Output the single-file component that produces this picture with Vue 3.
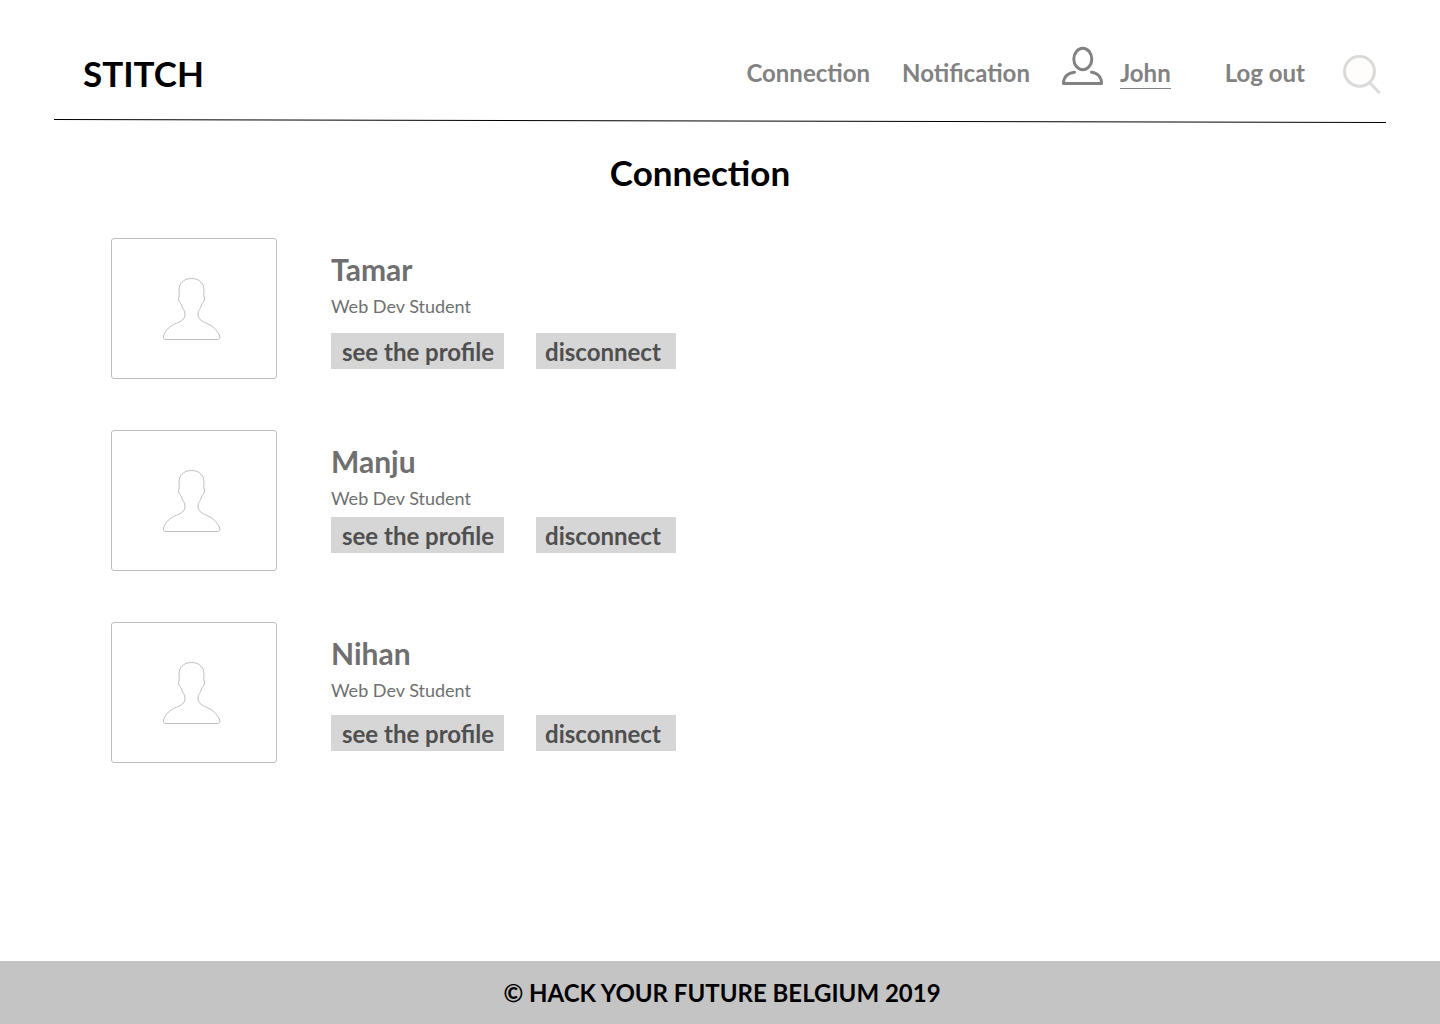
<script setup>
const people = [
  { name: 'Tamar', role: 'Web Dev Student', spacing: 'roomy' },
  { name: 'Manju', role: 'Web Dev Student', spacing: 'tight' },
  { name: 'Nihan', role: 'Web Dev Student', spacing: 'medium' },
]
</script>

<template>
  <div class="page">
    <header class="header">
      <div class="bar">
        <a class="logo" href="#">STITCH</a>
        <nav class="nav">
          <a href="#">Connection</a>
          <a class="notification" href="#">Notification</a>
          <svg class="user-icon" viewBox="0 0 42 40" aria-hidden="true">
            <ellipse cx="20.8" cy="13" rx="9" ry="10.7" />
            <path d="M12.5 26.2C6 26.8 1.5 31 1.5 37.5H39.5C39.5 31 35.5 26.8 29.5 26.2" />
          </svg>
          <a class="user" href="#">John</a>
          <a class="logout" href="#">Log out</a>
          <button class="search" type="button" aria-label="Search">
            <svg viewBox="0 0 38 40" aria-hidden="true">
              <circle cx="16.5" cy="16.3" r="15" />
              <path d="M27 28L36.8 38.3" />
            </svg>
          </button>
        </nav>
      </div>
      <svg class="rule" viewBox="0 0 1332 4" preserveAspectRatio="none" aria-hidden="true">
        <line x1="0" y1="0.5" x2="1332" y2="3.5" />
      </svg>
    </header>

    <main class="main">
      <h1>Connection</h1>
      <ul class="people">
        <li v-for="person in people" :key="person.name" class="person">
          <div class="photo">
            <svg viewBox="0 0 60 64" aria-hidden="true">
              <path d="M29.5 1.5C20.5 1.5 17 7.5 17 13C17 16 17.3 18 17.3 19C16 20.5 16.5 23.5 17.5 25C18.2 26.2 19 26.2 19.5 28C20.3 32 23 33 23 37C23 42.5 19 44.5 14 46.5C6 49.5 2.5 55.5 1.6 59C1 61.3 2 62.5 4 62.5H55.5C57.5 62.5 58.3 61.3 57.7 59C56.5 55.5 52.5 49.5 45 46.5C40.5 44.5 36 42.5 36 37C36 33 38.7 32 39.5 28C40 26.2 40.8 26.2 41.5 25C42.5 23.5 43 20.5 41.7 19C41.7 18 42 16 42 13C42 7.5 38.5 1.5 29.5 1.5Z" />
            </svg>
          </div>
          <div class="details">
            <h2>{{ person.name }}</h2>
            <p>{{ person.role }}</p>
            <div class="actions" :class="person.spacing">
              <button class="profile" type="button">see the profile</button>
              <button class="disconnect" type="button">disconnect</button>
            </div>
          </div>
        </li>
      </ul>
    </main>

    <footer class="footer">© HACK YOUR FUTURE BELGIUM 2019</footer>
  </div>
</template>

<style>
body {
  margin: 0;
  background: #fff;
}
</style>

<style scoped>
.page {
  display: flex;
  flex-direction: column;
  min-height: 100vh;
  font-family: Lato, Carlito, sans-serif;
  font-weight: 700;
}

a {
  color: inherit;
  text-decoration: none;
}

button {
  margin: 0;
  border: 0;
  font: inherit;
  cursor: pointer;
}

svg {
  display: block;
  flex: none;
  fill: none;
}

.header {
  padding: 46px 54px 0;
}

.bar {
  display: flex;
  justify-content: space-between;
  align-items: flex-start;
  height: 73px;
  padding: 0 5px 0 29px;
}

.logo {
  margin-top: 5px;
  font-size: 35px;
  line-height: 44px;
  color: #000;
}

.nav {
  display: flex;
  align-items: flex-start;
  font-size: 24px;
  line-height: 28px;
  color: #828282;
}

.nav a {
  margin-top: 13px;
}

.nav .notification {
  margin-left: 32px;
}

.user-icon {
  width: 42px;
  height: 40px;
  margin-left: 32px;
  stroke: #828282;
  stroke-width: 3;
  stroke-linecap: round;
  stroke-linejoin: round;
}

.user {
  margin-left: 16px;
  padding-bottom: 1px;
  border-bottom: 1px solid #828282;
}

.nav .logout {
  margin-left: 54px;
}

.search {
  margin: 9px 0 0 38px;
  padding: 0;
  background: none;
}

.search svg {
  width: 38px;
  height: 40px;
  stroke: #dadada;
  stroke-width: 3;
}

.search circle {
  fill: #fffcfc;
}

.rule {
  width: 100%;
  height: 4px;
  stroke: #000;
  stroke-width: 1;
}

.main {
  flex: 1;
  padding: 27px 40px 40px 0;
}

h1 {
  margin: 0;
  font-size: 35px;
  line-height: 44px;
  text-align: center;
  color: #000;
}

.people {
  display: flex;
  flex-direction: column;
  gap: 51px;
  margin: 44px 0 0;
  padding: 0 0 0 111px;
  list-style: none;
}

.person {
  display: flex;
  gap: 54px;
  height: 141px;
}

.photo {
  display: flex;
  flex: none;
  box-sizing: border-box;
  width: 166px;
  border: 1px solid #bdbdbd;
  border-radius: 3px;
  padding: 38px 0 0 50px;
}

.photo svg {
  width: 60px;
  height: 64px;
  stroke: #bdbdbd;
  stroke-width: 1;
}

.details {
  padding-top: 13px;
}

h2 {
  margin: 0;
  font-size: 30px;
  line-height: 36px;
  color: #6f6f6f;
}

p {
  margin: 8px 0 0;
  font-size: 18px;
  font-weight: 400;
  line-height: 22px;
  color: #6f6f6f;
}

.actions {
  display: flex;
  gap: 32px;
}

.roomy {
  margin-top: 16px;
}

.tight {
  margin-top: 8px;
}

.medium {
  margin-top: 14px;
}

.actions button {
  padding: 5px 10px 3px;
  font-size: 24px;
  line-height: 28px;
  text-align: left;
  color: #4f4f4f;
  background: #d6d6d6;
}

.actions .profile {
  min-width: 173px;
  padding-left: 11px;
}

.actions .disconnect {
  min-width: 140px;
  padding-left: 9px;
}

.footer {
  padding: 18px 0 17px 4px;
  font-size: 24px;
  line-height: 28px;
  text-align: center;
  color: #000;
  background: #c4c4c4;
}
</style>
